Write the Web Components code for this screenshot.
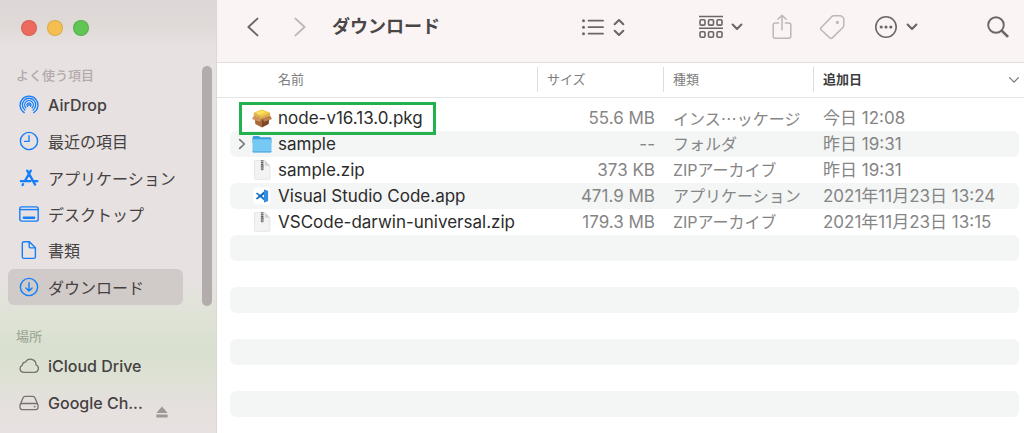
<!DOCTYPE html>
<html lang="ja">
<head>
<meta charset="utf-8">
<title>ダウンロード</title>
<style>
  body { margin: 0; background: #fff; font-family: Inter, "Noto Sans CJK JP", sans-serif; }
</style>
</head>
<body>
<finder-window></finder-window>

<script>
const ICONS = {
  airdrop: ['0 0 20 20', `<g fill="none" stroke="currentColor" stroke-width="1.3" stroke-linecap="round">
    <path d="M5.2 17.6a8.9 8.9 0 1 1 9.6 0"/><path d="M5.9 15a6.6 6.6 0 1 1 8.2 0"/><path d="M6.9 12.9a4.3 4.3 0 1 1 6.2 0"/><path d="M8.5 11.3a2 2 0 1 1 3 0"/></g><circle cx="10" cy="10" r="1" fill="currentColor"/>`],
  clock: ['0 0 20 20', `<g fill="none" stroke="currentColor" stroke-width="1.4" stroke-linecap="round" stroke-linejoin="round"><circle cx="10" cy="10" r="8.6"/><path d="M10 4.6V10.4H5.6"/></g>`],
  apps: ['0 0 20 20', `<g fill="none" stroke="currentColor" stroke-width="2.3" stroke-linecap="round"><path d="M8.2 2.6l7.9 14M11.8 2.6L6 12.9M1.9 13.2h9.5M15 13.2h3.4M4.1 16.2l-.5.8"/></g>`],
  desktop: ['0 0 20 20', `<g fill="none" stroke="currentColor" stroke-width="1.4"><rect x=".8" y="2.9" width="18.4" height="14.2" rx="1.8"/><path d="M1 5.6h18"/></g><rect x="3.8" y="12.4" width="12.4" height="2.6" rx=".8" fill="currentColor"/>`],
  doc: ['0 0 20 20', `<path d="M5 1.7h5.4l6 6v9a1.7 1.7 0 0 1-1.7 1.7H5a1.7 1.7 0 0 1-1.7-1.7V3.4A1.7 1.7 0 0 1 5 1.7zM10.2 2v4.4a1.5 1.5 0 0 0 1.5 1.5h4.5" fill="none" stroke="currentColor" stroke-width="1.4" stroke-linejoin="round"/>`],
  download: ['0 0 20 20', `<g fill="none" stroke="currentColor" stroke-width="1.4" stroke-linecap="round" stroke-linejoin="round"><circle cx="10" cy="10" r="8.6"/><path d="M10 5.8V14M6.9 11l3.1 3.1 3.1-3.1"/></g>`],
  cloud: ['0 0 20 20', `<path d="M4.6 16.3h11a3.9 3.9 0 0 0 1.4-7.5 5.6 5.6 0 0 0-10.6-2.6 3.5 3.5 0 0 0-3.2 3.2A3.6 3.6 0 0 0 4.6 16.3z" fill="none" stroke="currentColor" stroke-width="1.3" stroke-linejoin="round"/>`],
  disk: ['0 0 20 20', `<g fill="none" stroke="currentColor" stroke-width="1.3" stroke-linejoin="round"><path d="M1 12L4 4.9Q4.6 3.4 6.2 3.4h7.6Q15.4 3.4 16 4.9L19 12v2.3a2.3 2.3 0 0 1-2.3 2.3H3.3A2.3 2.3 0 0 1 1 14.3zM1.3 11.4q.6-.9 2-.9h13.4q1.4 0 2 .9"/></g><circle cx="15.6" cy="13.6" r=".9" fill="currentColor"/>`],
  eject: ['0 0 12 12', `<path d="M6 .6L11.6 7H.4zM.4 8.5h11.2v2.9H.4z" fill="currentColor"/>`],
  back: ['0 0 14 20', `<path d="M11.5 1.6L2.4 10l9.1 8.4" fill="none" stroke="currentColor" stroke-width="1.9" stroke-linecap="round" stroke-linejoin="round"/>`],
  forward: ['0 0 14 20', `<path d="M2.5 1.6L11.6 10l-9.1 8.4" fill="none" stroke="currentColor" stroke-width="1.9" stroke-linecap="round" stroke-linejoin="round"/>`],
  list: ['0 0 24 20', `<g stroke="currentColor" stroke-width="1.7" stroke-linecap="round"><path d="M7.5 3.7h14.6M7.5 10.2h14.6M7.5 16.7h14.6"/></g><g fill="currentColor"><circle cx="2.5" cy="3.7" r="1.5"/><circle cx="2.5" cy="10.2" r="1.5"/><circle cx="2.5" cy="16.7" r="1.5"/></g>`],
  updown: ['0 0 12 20', `<path d="M1.7 7.2L6 3l4.3 4.2M1.7 13.8L6 18l4.3-4.2" fill="none" stroke="currentColor" stroke-width="2.1" stroke-linecap="round" stroke-linejoin="round"/>`],
  group: ['0 0 24 24', `<g fill="none" stroke="currentColor" stroke-width="1.6"><path d="M0 1.5h24M0 13.2h24"/><rect x="1" y="4.7" width="5" height="5.4" rx="1.2"/><rect x="9.5" y="4.7" width="5" height="5.4" rx="1.2"/><rect x="18" y="4.7" width="5" height="5.4" rx="1.2"/><rect x="1" y="16.8" width="5" height="5.4" rx="1.2"/><rect x="9.5" y="16.8" width="5" height="5.4" rx="1.2"/><rect x="18" y="16.8" width="5" height="5.4" rx="1.2"/></g>`],
  down: ['0 0 12 8', `<path d="M1.6 1.6L6 6l4.4-4.4" fill="none" stroke="currentColor" stroke-width="2.1" stroke-linecap="round" stroke-linejoin="round"/>`],
  share: ['0 0 20 26', `<path d="M6.5 9H3.2A2 2 0 0 0 1.2 11v11.2a2 2 0 0 0 2 2h13.6a2 2 0 0 0 2-2V11a2 2 0 0 0-2-2h-3.3M10 15.8V1.4M5.9 5.3L10 1.3l4.1 4" fill="none" stroke="currentColor" stroke-width="1.5" stroke-linecap="round" stroke-linejoin="round"/>`],
  tag: ['0 0 26 26', `<path d="M14.6 1.7h6.6q1.1 0 1.8.8l1 1q.8.8.8 1.9v6.2q0 1-.7 1.7L13.3 23.900q-1.2 1.2-2.4 0l-8.700-7.900q-1.200-1.200 0-2.400L12.900 2.400q.7-.7 1.700-.7z" fill="none" stroke="currentColor" stroke-width="1.5" stroke-linejoin="round"/><circle cx="18.4" cy="8.4" r="1.6" fill="currentColor"/>`],
  more: ['0 0 24 24', `<circle cx="12" cy="12" r="10.2" fill="none" stroke="currentColor" stroke-width="1.6"/><g fill="currentColor"><circle cx="7.2" cy="12" r="1.6"/><circle cx="12" cy="12" r="1.6"/><circle cx="16.8" cy="12" r="1.6"/></g>`],
  search: ['0 0 24 24', `<g fill="none" stroke="currentColor" stroke-linecap="round"><circle cx="10" cy="10" r="7.8" stroke-width="1.9"/><path d="M15.9 15.9l5.5 5.3" stroke-width="2.6"/></g>`],
  sort: ['0 0 12 8', `<path d="M1.6 1.6L6 6.2l4.4-4.6" fill="none" stroke="currentColor" stroke-width="1.2" stroke-linecap="round" stroke-linejoin="round"/>`],
  open: ['0 0 8 12', `<path d="M1.7 1.7L6.3 6l-4.6 4.3" fill="none" stroke="currentColor" stroke-width="1.7" stroke-linecap="round" stroke-linejoin="round"/>`],
  pkg: ['0 0 22 22', `<path d="M3.5 9l7.5 3v8.5L4.3 17z" fill="#a8693a"/><path d="M18.5 9L11 12v8.5l6.7-3.5z" fill="#7d4826"/><path d="M3 5.5L11 2.5l8 3-8 4z" fill="#f0cb3e"/><path d="M4.5 6L11 3.5 15 5 8 8z" fill="#f9e169"/><path d="M3 5.5L11 9.3 19 5.5l.2 3L11 12 2.8 8.5z" fill="#dfae48"/><path d="M2.8 8.8L11 11.6l-2.2 3.2L1 12z" fill="#cf955f"/><path d="M19.2 8.8L11 11.6l2.2 3.2L21 12z" fill="#bd7f4b"/>`],
  folder: ['0 0 22 22', `<path d="M1.5 4.6Q1.5 3 3 3h4.2q.8 0 1.4.6l.8.7H19q1.5 0 1.5 1.5V10h-19z" fill="#3a9fdc"/><rect x="1.5" y="6.2" width="19" height="13.3" rx="1.2" fill="#76c8f5"/><path d="M1.5 18h19v.5a1 1 0 0 1-1 1h-17a1 1 0 0 1-1-1z" fill="#5cb2e4"/>`],
  zip: ['0 0 22 22', `<path d="M3.5 1.5h10.3l5.2 5.2v12.6a1 1 0 0 1-1 1H4.5a1 1 0 0 1-1-1z" fill="#f3f3f3" stroke="#d9d9d9" stroke-width=".6"/><path d="M13.8 1.5v4.2a1 1 0 0 0 1 1H19z" fill="#d3d3d3"/><path d="M11.2 1.3v7" stroke="#666" stroke-width="2.6" stroke-dasharray="1.2 .5"/><rect x="9.9" y="6.2" width="2.6" height="5" rx=".7" fill="#777"/><path d="M11.2 8v2" stroke="#ccc" stroke-width=".8"/>`],
  vscode: ['0 0 22 22', `<rect x="2.4" y="2.4" width="17.2" height="17.2" rx="4" fill="#fff"/><path d="M4.8 8.4l1.3-1L15 14v3.3z" fill="#1f7fd0"/><path d="M4.8 13.4l1.3 1L15 8V4.7z" fill="#1568b3"/><path d="M13.6 4.5l3.5 1.6v9.8l-3.5 1.6-.6-.5V5z" fill="#2f8fe0"/>`],
};

function define(name, html, setup) {
  const template = document.createElement('template');
  template.innerHTML = html;
  customElements.define(name, class extends HTMLElement {
    constructor() {
      super();
      this.attachShadow({ mode: 'open' }).append(template.content.cloneNode(true));
    }
    connectedCallback() { if (setup) setup(this, this.shadowRoot); }
  });
}

define('ui-icon', `<style>
  :host { display: block; flex: none; width: 20px; height: 20px; }
  svg { display: block; width: 100%; height: 100%; }
</style><svg aria-hidden="true"></svg>`, (host, root) => {
  const [box, shapes] = ICONS[host.getAttribute('name')];
  const svg = root.querySelector('svg');
  svg.setAttribute('viewBox', box);
  svg.innerHTML = shapes;
});

define('traffic-lights', `<style>
  :host { display: flex; align-items: center; gap: 10px; height: 56px; padding: 0 0 7px 21px; }
  button { width: 16px; height: 16px; padding: 0; border: 1px solid #0000001c; border-radius: 50%; }
  .close { background: #ed6a5f; } .min { background: #f5bf4f; } .zoom { background: #61c554; }
</style>
<button class="close" aria-label="閉じる"></button><button class="min" aria-label="しまう"></button><button class="zoom" aria-label="拡大"></button>`);

define('side-section', `<style>
  :host { display: block; }
  h2 { margin: 0; padding-left: 16px; font-size: 13px; line-height: 24px; font-weight: 500; color: var(--label, #b3abab); }
  nav { display: grid; grid-auto-rows: 1fr; min-height: var(--list-height); }
</style><h2><slot name="label"></slot></h2><nav><slot></slot></nav>`);

define('side-item', `<style>
  :host { display: grid; margin: 0 33px 0 8px; border-radius: 6px; }
  :host([selected]) { background: #d0cac8; }
  div { display: flex; align-items: center; }
  a { flex: 1; display: flex; align-items: center; gap: 9px; padding-left: 11px; color: #454142; text-decoration: none; font-size: 16px; white-space: nowrap; }
  a:lang(en) { font-weight: 500; }
  ::slotted([slot=action]) { align-self: flex-end; margin: 0 15px 3px 0; }
  ui-icon { color: var(--tint, #147efb); }
</style><div><a href="#"><span><slot></slot></span></a><slot name="action"></slot></div>`, (host, root) => {
  const icon = document.createElement('ui-icon');
  icon.setAttribute('name', host.getAttribute('icon'));
  root.querySelector('a').prepend(icon);
});

define('eject-button', `<style>
  :host { display: block; }
  button { display: block; padding: 0; border: 0; background: none; color: #9b9896; }
  ui-icon { width: 12px; height: 12px; }
</style><button aria-label="取り出す"><ui-icon name="eject"></ui-icon></button>`);

define('finder-sidebar', `<style>
  :host { display: block; position: relative; box-sizing: border-box; padding-bottom: 12px; border-right: 1px solid #ddd7d6;
    background: linear-gradient(180deg, #dcd7d6 0, #dfdad8 24px, #e7e1e1 48px, #e7e2e1 280px, #dfe3d7 312px, #d9e0cf 350px, #dde1d4 374px, #e6e0de 408px, #e8e1e1 433px); }
  .favorites { --list-height: 218px; }
  .places { --list-height: 73px; --tint: #77726f; --label: #9eaa96; margin-top: 19px; }
  .bar { position: absolute; top: 66px; right: 4px; width: 10px; height: 240px; border-radius: 5px; background: #b2adac; }
</style>
<traffic-lights></traffic-lights>
<side-section class="favorites"><span slot="label">よく使う項目</span>
  <side-item icon="airdrop" lang="en">AirDrop</side-item>
  <side-item icon="clock">最近の項目</side-item>
  <side-item icon="apps">アプリケーション</side-item>
  <side-item icon="desktop">デスクトップ</side-item>
  <side-item icon="doc">書類</side-item>
  <side-item icon="download" selected>ダウンロード</side-item>
</side-section>
<side-section class="places"><span slot="label">場所</span>
  <side-item icon="cloud" lang="en">iCloud Drive</side-item>
  <side-item icon="disk" lang="en">Google Ch...<eject-button slot="action"></eject-button></side-item>
</side-section>
<div class="bar"></div>`);

define('finder-toolbar', `<style>
  :host { display: flex; align-items: center; box-sizing: border-box; height: 63px; padding: 0 14px 8px 29px; background: #faf5f4; border-bottom: 1px solid #e2dddc; color: #6d6666; }
  button { display: flex; align-items: center; gap: 8px; padding: 0; border: 0; background: none; color: inherit; }
  button:disabled { color: #bdb7b6; }
  h1 { flex: 1; margin: 0 0 0 25px; font-size: 18px; line-height: 26px; font-weight: 700; color: #4a4646; white-space: nowrap; }
  .next { margin-left: 33px; }
  .nav { width: 14px; }
  .list { width: 24px; } .updown { width: 12px; }
  .arrange { margin: 0 29px 0 74px; }
  .big { width: 24px; height: 24px; } .down { width: 12px; height: 8px; }
  .share { width: 20px; height: 26px; } .tag { width: 26px; height: 26px; }
  .label { margin-left: 27px; }
  .more { margin: 0 68px 0 29px; }
</style>
<button aria-label="戻る"><ui-icon class="nav" name="back"></ui-icon></button>
<button class="next" aria-label="進む" disabled><ui-icon class="nav" name="forward"></ui-icon></button>
<h1>ダウンロード</h1>
<button aria-label="表示"><ui-icon class="list" name="list"></ui-icon><ui-icon class="updown" name="updown"></ui-icon></button>
<button class="arrange" aria-label="グループ"><ui-icon class="big" name="group"></ui-icon><ui-icon class="down" name="down"></ui-icon></button>
<button aria-label="共有" disabled><ui-icon class="share" name="share"></ui-icon></button>
<button class="label" aria-label="タグ" disabled><ui-icon class="tag" name="tag"></ui-icon></button>
<button class="more" aria-label="アクション"><ui-icon class="big" name="more"></ui-icon><ui-icon class="down" name="down"></ui-icon></button>
<button aria-label="検索"><ui-icon class="big" name="search"></ui-icon></button>`);

const FILES = [
  { icon: 'pkg', name: 'node-v16.13.0.pkg', size: '55.6 MB', kind: 'インス…ッケージ', date: '今日 12:08', marked: true },
  { icon: 'folder', name: 'sample', size: '--', kind: 'フォルダ', date: '昨日 19:31', folder: true },
  { icon: 'zip', name: 'sample.zip', size: '373 KB', kind: 'ZIPアーカイブ', date: '昨日 19:31' },
  { icon: 'vscode', name: 'Visual Studio Code.app', size: '471.9 MB', kind: 'アプリケーション', date: '2021年11月23日 13:24' },
  { icon: 'zip', name: 'VSCode-darwin-universal.zip', size: '179.3 MB', kind: 'ZIPアーカイブ', date: '2021年11月23日 13:15' },
];
const ROWS = 12;

define('file-list', `<style>
  :host { display: block; padding-bottom: 16px; }
  table { width: 100%; table-layout: fixed; border-collapse: separate; border-spacing: 0; }
  .size { width: 126px; } .kind { width: 150px; } .date { width: 211px; }
  th { padding: 4px 0 5px; border-bottom: 1px solid #e4e4e4; font-weight: 400; text-align: left; }
  th button { display: flex; align-items: center; justify-content: space-between; box-sizing: border-box; width: 100%; height: 25px; padding: 0 4px 0 9px;
    border: 0; border-left: 1px solid #dedede; background: none; font: 400 13px/25px Inter, "Noto Sans CJK JP", sans-serif; color: #7e7e7e; }
  th:first-child button { border-left: 0; padding-left: 61px; }
  th[aria-sort] button { font-weight: 600; color: #3c3c3c; }
  th ui-icon { width: 12px; height: 8px; color: #777; }
  tbody::before { content: ""; display: block; height: 7px; }
  td { height: 26px; padding: 0 0 0 10px; font-size: 17px; line-height: 20px; vertical-align: middle; color: #858585; white-space: nowrap; }
  td:first-child { padding: 0; border-left: 13px solid transparent; border-radius: 19px 0 0 19px / 6px 0 0 6px; background-clip: padding-box; color: #2b2b2b; }
  td:nth-child(2) { padding: 0 8px 0 0; text-align: right; }
  td:nth-child(3) { font-size: 16px; }
  td:last-child { border-right: 5px solid transparent; border-radius: 0 11px 11px 0 / 0 6px 6px 0; background-clip: padding-box; }
  tbody tr:nth-child(even) td { background-color: #f4f5f5; }
  .dots { font-family: "Noto Sans CJK JP", sans-serif; }
  .entry { display: flex; align-items: center; height: 26px; }
  .toggle { display: flex; justify-content: center; box-sizing: border-box; width: 21px; padding: 0 0 0 2px; border: 0; background: none; color: #777; }
  .toggle ui-icon { width: 8px; height: 12px; }
  .file { display: flex; align-items: center; gap: 5px; position: relative; height: 26px; }
  .file ui-icon { width: 22px; height: 22px; }
  .marked::after { content: ""; position: absolute; inset: -3px -13px -4px -12px; border: 3px solid #22b14c; }
</style>
<table>
  <colgroup><col><col class="size"><col class="kind"><col class="date"></colgroup>
  <thead><tr>
    <th scope="col"><button>名前</button></th><th scope="col"><button>サイズ</button></th><th scope="col"><button>種類</button></th>
    <th scope="col" aria-sort="descending"><button>追加日<ui-icon name="sort"></ui-icon></button></th>
  </tr></thead>
  <tbody></tbody>
</table>`, (host, root) => {
  const row = f => !f ? '<tr><td></td><td></td><td></td><td></td></tr>' : `<tr>
    <td><div class="entry">${f.folder ? '<button class="toggle" aria-label="開く"><ui-icon name="open"></ui-icon></button>' : '<span class="toggle"></span>'}
      <span class="file${f.marked ? ' marked' : ''}"><ui-icon name="${f.icon}"></ui-icon><span>${f.name}</span></span></div></td>
    <td>${f.size}</td><td>${f.kind.replace('…', '<span class="dots">…</span>')}</td><td>${f.date}</td></tr>`;
  root.querySelector('tbody').innerHTML = Array.from({ length: ROWS }, (_, i) => row(FILES[i])).join('');
});

define('finder-window', `<style>
  :host { display: grid; grid-template-columns: 217px minmax(0, 1fr); min-height: 100vh; }
</style><finder-sidebar></finder-sidebar><main><finder-toolbar></finder-toolbar><file-list></file-list></main>`);
</script>
</body>
</html>
